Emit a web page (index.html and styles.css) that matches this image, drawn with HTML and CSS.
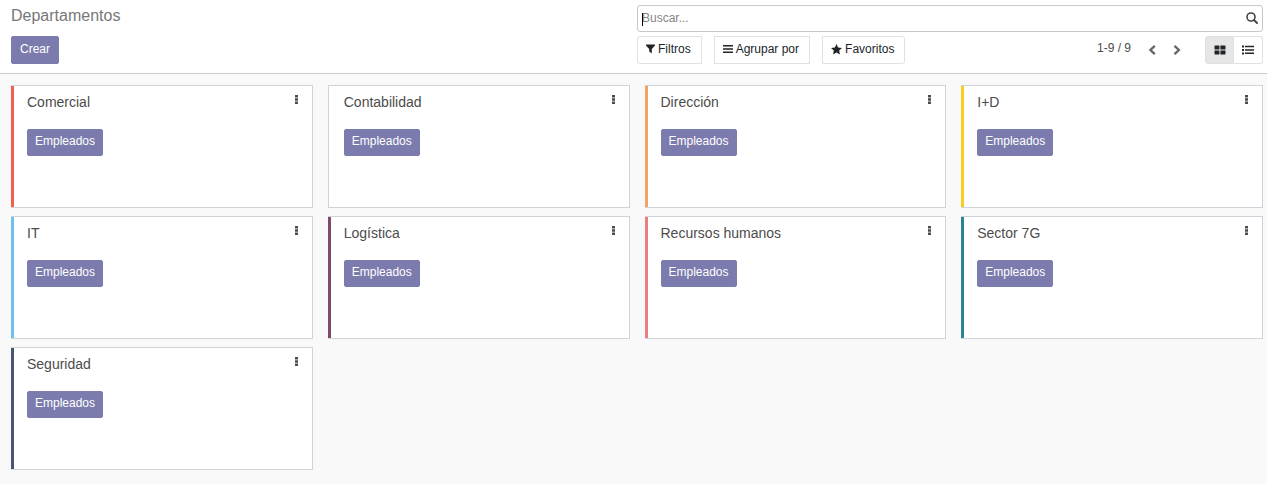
FILE: index.html
```html
<!DOCTYPE html>
<html lang="es">
<head>
<meta charset="utf-8">
<meta name="viewport" content="width=device-width, initial-scale=1">
<title>Departamentos</title>
<link rel="stylesheet" href="styles.css">
</head>
<body>
<header class="control-panel">
  <div class="panel-left">
    <h1 class="page-title">Departamentos</h1>
    <button type="button" class="btn-primary btn-create">Crear</button>
  </div>
  <div class="panel-right">
    <div class="search">
      <input class="search-input" type="text" placeholder="Buscar..." aria-label="Buscar">
      <span class="search-caret"></span>
      <svg class="search-icon" viewBox="0 0 12 12" aria-hidden="true"><circle cx="5" cy="5" r="4" fill="none" stroke="currentColor" stroke-width="1.6"/><path d="M8 8l3 3" stroke="currentColor" stroke-width="1.9" stroke-linecap="round"/></svg>
    </div>
    <div class="toolbar">
      <div class="filters">
        <button type="button" class="filter filter-first">
          <svg class="icon-filter" viewBox="0 0 9 10" aria-hidden="true"><path d="M0 0.6h9v1L5.8 5V9.6L3.2 7.6V5L0 1.6z" fill="currentColor"/></svg>Filtros</button>
        <button type="button" class="filter">
          <svg class="icon-bars" viewBox="0 0 10 10" aria-hidden="true"><path d="M0 1h10v1.6H0zM0 4.2h10v1.6H0zM0 7.4h10V9H0z" fill="currentColor"/></svg>Agrupar por</button>
        <button type="button" class="filter filter-last">
          <svg class="icon-star" viewBox="0 0 11 11" aria-hidden="true"><path d="M5.5 0l1.6 3.5 3.9.5-2.8 2.6.7 3.9-3.4-1.9-3.4 1.9.7-3.9L0 4l3.9-.5z" fill="currentColor"/></svg>Favoritos</button>
      </div>
      <div class="pager">
        <span class="pager-value">1-9 / 9</span>
        <button type="button" class="pager-button" aria-label="Anterior"><svg class="icon-chevron" viewBox="0 0 8 10" aria-hidden="true"><path d="M6.8 0.8L2.4 5l4.4 4.2" fill="none" stroke="currentColor" stroke-width="2.3"/></svg></button>
        <button type="button" class="pager-button" aria-label="Siguiente"><svg class="icon-chevron" viewBox="0 0 8 10" aria-hidden="true"><path d="M1.5 0.8L5.9 5 1.5 9.2" fill="none" stroke="currentColor" stroke-width="2.3"/></svg></button>
        <div class="views">
          <button type="button" class="view view-active" aria-label="Kanban"><svg class="icon-view" viewBox="0 0 12 10" aria-hidden="true"><path d="M1 .5h4.4v4H.5V1zM6.4.5H11l.5.5v3.5H6.4zM.5 5.5h4.9v4H1L.5 9zM6.4 5.5h5.1V9l-.5.5H6.4z" fill="currentColor"/></svg></button>
          <button type="button" class="view" aria-label="Lista"><svg class="icon-view" viewBox="0 0 12 10" aria-hidden="true"><path d="M0 .5h2v2H0zM3 .8h9v1.5H3zM0 4h2v2H0zM3 4.2h9v1.5H3zM0 7.4h2v2H0zM3 7.6h9v1.5H3z" fill="currentColor"/></svg></button>
        </div>
      </div>
    </div>
  </div>
</header>
<main class="kanban">
  <article class="card card-red"><div class="card-head"><h2 class="card-title">Comercial</h2><button type="button" class="card-menu" aria-label="Menú"><svg class="icon-dots" viewBox="0 0 3 9" aria-hidden="true"><path d="M0 0h3v2.4H0zM0 3.3h3v2.4H0zM0 6.6h3V9H0z" fill="currentColor"/></svg></button></div><button type="button" class="btn-primary">Empleados</button></article>
  <article class="card"><div class="card-head"><h2 class="card-title">Contabilidad</h2><button type="button" class="card-menu" aria-label="Menú"><svg class="icon-dots" viewBox="0 0 3 9" aria-hidden="true"><path d="M0 0h3v2.4H0zM0 3.3h3v2.4H0zM0 6.6h3V9H0z" fill="currentColor"/></svg></button></div><button type="button" class="btn-primary">Empleados</button></article>
  <article class="card card-orange"><div class="card-head"><h2 class="card-title">Dirección</h2><button type="button" class="card-menu" aria-label="Menú"><svg class="icon-dots" viewBox="0 0 3 9" aria-hidden="true"><path d="M0 0h3v2.4H0zM0 3.3h3v2.4H0zM0 6.6h3V9H0z" fill="currentColor"/></svg></button></div><button type="button" class="btn-primary">Empleados</button></article>
  <article class="card card-yellow"><div class="card-head"><h2 class="card-title">I+D</h2><button type="button" class="card-menu" aria-label="Menú"><svg class="icon-dots" viewBox="0 0 3 9" aria-hidden="true"><path d="M0 0h3v2.4H0zM0 3.3h3v2.4H0zM0 6.6h3V9H0z" fill="currentColor"/></svg></button></div><button type="button" class="btn-primary">Empleados</button></article>
  <article class="card card-sky"><div class="card-head"><h2 class="card-title">IT</h2><button type="button" class="card-menu" aria-label="Menú"><svg class="icon-dots" viewBox="0 0 3 9" aria-hidden="true"><path d="M0 0h3v2.4H0zM0 3.3h3v2.4H0zM0 6.6h3V9H0z" fill="currentColor"/></svg></button></div><button type="button" class="btn-primary">Empleados</button></article>
  <article class="card card-plum"><div class="card-head"><h2 class="card-title">Logística</h2><button type="button" class="card-menu" aria-label="Menú"><svg class="icon-dots" viewBox="0 0 3 9" aria-hidden="true"><path d="M0 0h3v2.4H0zM0 3.3h3v2.4H0zM0 6.6h3V9H0z" fill="currentColor"/></svg></button></div><button type="button" class="btn-primary">Empleados</button></article>
  <article class="card card-salmon"><div class="card-head"><h2 class="card-title">Recursos humanos</h2><button type="button" class="card-menu" aria-label="Menú"><svg class="icon-dots" viewBox="0 0 3 9" aria-hidden="true"><path d="M0 0h3v2.4H0zM0 3.3h3v2.4H0zM0 6.6h3V9H0z" fill="currentColor"/></svg></button></div><button type="button" class="btn-primary">Empleados</button></article>
  <article class="card card-teal"><div class="card-head"><h2 class="card-title">Sector 7G</h2><button type="button" class="card-menu" aria-label="Menú"><svg class="icon-dots" viewBox="0 0 3 9" aria-hidden="true"><path d="M0 0h3v2.4H0zM0 3.3h3v2.4H0zM0 6.6h3V9H0z" fill="currentColor"/></svg></button></div><button type="button" class="btn-primary">Empleados</button></article>
  <article class="card card-navy"><div class="card-head"><h2 class="card-title">Seguridad</h2><button type="button" class="card-menu" aria-label="Menú"><svg class="icon-dots" viewBox="0 0 3 9" aria-hidden="true"><path d="M0 0h3v2.4H0zM0 3.3h3v2.4H0zM0 6.6h3V9H0z" fill="currentColor"/></svg></button></div><button type="button" class="btn-primary">Empleados</button></article>
</main>
</body>
</html>
```
FILE: styles.css
```css
* { box-sizing: border-box; }
body {
  margin: 0;
  background: #f9f9f9;
  color: #4c4c4c;
  font: 12px/18px "Liberation Sans", Arial, sans-serif;
}
button, input { font: inherit; color: inherit; margin: 0; }
button { cursor: pointer; }
svg { display: block; flex: none; }

.control-panel {
  display: grid;
  grid-template-columns: 1fr 1fr;
  padding: 5px 4px 9px 11px;
  background: #fff;
  border-bottom: 1px solid #c9ccd2;
}
.panel-left, .panel-right {
  display: flex;
  flex-direction: column;
  gap: 4px;
}
.panel-left { align-items: flex-start; }
.page-title {
  margin: 0;
  height: 27px;
  font-size: 16px;
  font-weight: 400;
  line-height: 22px;
  color: #777;
}
.btn-primary {
  padding: 3px 8px 5px;
  border: 1px solid #7c7bad;
  border-radius: 2px;
  background: #7c7bad;
  color: #fff;
  line-height: 18px;
}

.search {
  position: relative;
  display: flex;
  align-items: center;
  height: 27px;
  padding: 0 4px 2px;
  border: 1px solid #c6c8cc;
  border-radius: 3px;
}
.search-input {
  flex: 1;
  min-width: 0;
  padding: 0;
  border: 0;
  outline: 0;
  background: transparent;
}
.search-input::placeholder { color: #858585; opacity: 1; }
.search-caret {
  position: absolute;
  left: 4px;
  top: 7px;
  width: 1px;
  height: 13px;
  background: #000;
}
.search-icon { width: 12px; height: 12px; color: #444; }

.toolbar { display: flex; justify-content: space-between; }
.filters { display: flex; gap: 12px; }
.filter {
  display: flex;
  align-items: center;
  gap: 3px;
  height: 28px;
  padding: 0 10px 2px 8px;
  border: 1px solid #dee2e6;
  background: #fff;
  color: #212529;
}
.filter-first { border-radius: 3px 0 0 3px; }
.filter-last { border-radius: 0 3px 3px 0; }
.icon-filter { width: 9px; height: 10px; }
.icon-bars { width: 10px; height: 10px; }
.icon-star { width: 11px; height: 11px; }

.pager { display: flex; align-items: center; }
.pager-value { padding: 0 8px 4px 0; }
.pager-button {
  display: flex;
  justify-content: center;
  width: 25px;
  padding: 0 0 1px;
  border: 0;
  background: transparent;
  color: #666;
}
.icon-chevron { width: 8px; height: 10px; }
.views { display: flex; margin-left: 16px; }
.view {
  display: flex;
  align-items: center;
  justify-content: center;
  width: 29px;
  height: 28px;
  padding: 0 0 1px;
  border: 1px solid #dee2e6;
  border-left: 0;
  border-radius: 0 3px 3px 0;
  background: #fff;
  color: #212529;
}
.view-active {
  border-left: 1px solid #dee2e6;
  border-radius: 3px 0 0 3px;
  background: #e6e6e6;
}
.icon-view { width: 12px; height: 10px; }

.kanban {
  display: grid;
  grid-template-columns: repeat(4, 1fr);
  gap: 8px 15px;
  padding: 11px 4px 14px 11px;
}
.card {
  position: relative;
  min-height: 123px;
  padding: 8px 12px 8px 15px;
  border: 1px solid #ced4da;
  background: #fff;
}
/* Colour stripe laid over the left border */
.card::before {
  content: "";
  position: absolute;
  top: 0;
  bottom: 0;
  left: -1px;
  width: 3px;
  background: var(--stripe);
}
.card:not([class*="card-"])::before { display: none; }
.card-head {
  display: flex;
  justify-content: space-between;
  align-items: flex-start;
  margin-bottom: 18px;
}
.card-title {
  margin: 0;
  font-size: 14px;
  font-weight: 400;
  line-height: 17px;
}
.card-menu {
  padding: 1px 2px;
  border: 0;
  background: transparent;
}
.icon-dots { width: 3px; height: 9px; }
.card .btn-primary { padding: 2px 7px 5px; }

.card-red { --stripe: #f06050; }
.card-orange { --stripe: #f4a460; }
.card-yellow { --stripe: #f7cd1f; }
.card-sky { --stripe: #6cc1ed; }
.card-plum { --stripe: #814968; }
.card-salmon { --stripe: #eb7e7f; }
.card-teal { --stripe: #2c8397; }
.card-navy { --stripe: #475577; }
```
